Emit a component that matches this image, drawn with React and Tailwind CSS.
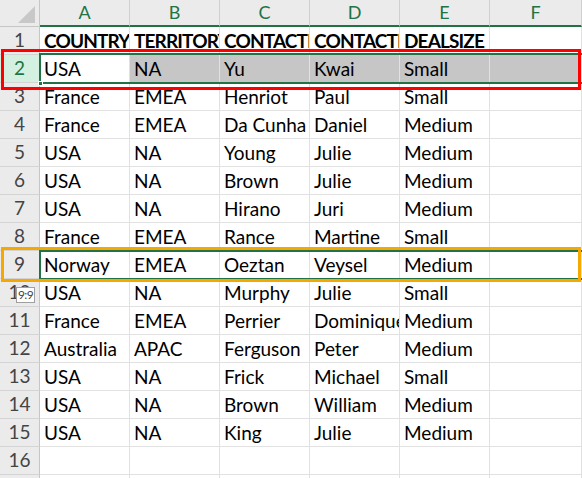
const cols = ["A", "B", "C", "D", "E", "F"];

const rows = [
  ["COUNTRY", "TERRITORY", "CONTACTLASTNAME", "CONTACTFIRSTNAME", "DEALSIZE", ""],
  ["USA", "NA", "Yu", "Kwai", "Small", ""],
  ["France", "EMEA", "Henriot", "Paul", "Small", ""],
  ["France", "EMEA", "Da Cunha", "Daniel", "Medium", ""],
  ["USA", "NA", "Young", "Julie", "Medium", ""],
  ["USA", "NA", "Brown", "Julie", "Medium", ""],
  ["USA", "NA", "Hirano", "Juri", "Medium", ""],
  ["France", "EMEA", "Rance", "Martine", "Small", ""],
  ["Norway", "EMEA", "Oeztan", "Veysel", "Medium", ""],
  ["USA", "NA", "Murphy", "Julie", "Small", ""],
  ["France", "EMEA", "Perrier", "Dominique", "Medium", ""],
  ["Australia", "APAC", "Ferguson", "Peter", "Medium", ""],
  ["USA", "NA", "Frick", "Michael", "Small", ""],
  ["USA", "NA", "Brown", "William", "Medium", ""],
  ["USA", "NA", "King", "Julie", "Medium", ""],
  ["", "", "", "", "", ""],
  ["", "", "", "", "", ""],
];

function Row({ num, cells }) {
  const selected = num === 2;
  return (
    <div className="flex h-[28px]">
      <div
        className={
          selected
            ? "flex w-[40px] shrink-0 items-center justify-center border-r border-b border-r-[#c6c6c6] border-b-[#d4d4d4] bg-[#d3f0e0] text-[19px] text-[#217346]"
            : "flex w-[40px] shrink-0 items-center justify-center border-r border-b border-r-[#c6c6c6] border-b-[#d4d4d4] bg-[#ebebeb] text-[19px] text-[#444]"
        }
      >
        {num}
      </div>
      {cells.map((text, i) => (
        <div
          key={i}
          className={
            (i === 5 ? "flex-1 " : "w-[90px] shrink-0 ") +
            (selected && i > 0 ? "bg-[#c6c6c6] " : "bg-white ") +
            (num === 1 ? "font-bold tracking-[-0.045em] " : "") +
            "flex items-center overflow-hidden whitespace-nowrap border-r border-b border-[#e1e1e1] pl-[4px] pt-[1px] text-[19px] text-black"
          }
        >
          {text}
        </div>
      ))}
    </div>
  );
}

export default function App() {
  return (
    <div
      className="relative h-[478px] w-[582px] overflow-hidden bg-white"
      style={{ fontFamily: "Lato, 'Liberation Sans', sans-serif" }}
    >
      {/* column headers */}
      <div className="flex h-[27px]">
        <div className="relative w-[40px] shrink-0 border-r border-b border-[#c6c6c6] bg-[#ebebeb]">
          <svg className="absolute inset-0" width="40" height="27">
            <polygon points="35,6 35,23 18,23" fill="#c8c8c8" />
          </svg>
        </div>
        {cols.map((c, i) => (
          <div
            key={c}
            className={
              (i === 5 ? "flex-1 " : "w-[90px] shrink-0 ") +
              "flex items-center justify-center border-r border-r-[#d0d0d0] border-b-2 border-b-[#217346] bg-[#ebebeb] text-[18px] text-[#217346]"
            }
          >
            {c}
          </div>
        ))}
      </div>

      {rows.map((cells, i) => (
        <Row key={i} num={i + 1} cells={cells} />
      ))}

      {/* row 2 selection */}
      <div className="absolute left-[39px] right-0 top-[53px] h-[31px] border-2 border-r-0 border-[#217346]" />
      <div className="absolute left-[38px] top-[81px] h-[5px] w-[5px] border border-white bg-[#217346]" />
      <div className="absolute left-[1px] top-[49px] h-[41px] w-[580px] border-[3px] border-[#ff0000]" />

      {/* row 9 selection */}
      <div className="absolute left-[39px] right-0 top-[250px] h-[30px] border-2 border-r-0 border-[#217346]" />
      <div className="absolute left-[1px] top-[247px] h-[35px] w-[580px] border-[3px] border-[#f5a800]" />

      {/* tooltip */}
      <div className="absolute left-[16px] top-[287px] flex h-[16px] w-[19px] items-center justify-center border border-[#a0a0a0] bg-white text-[12px] leading-none tracking-[-0.05em] text-[#444]">
        9:9
      </div>
    </div>
  );
}
